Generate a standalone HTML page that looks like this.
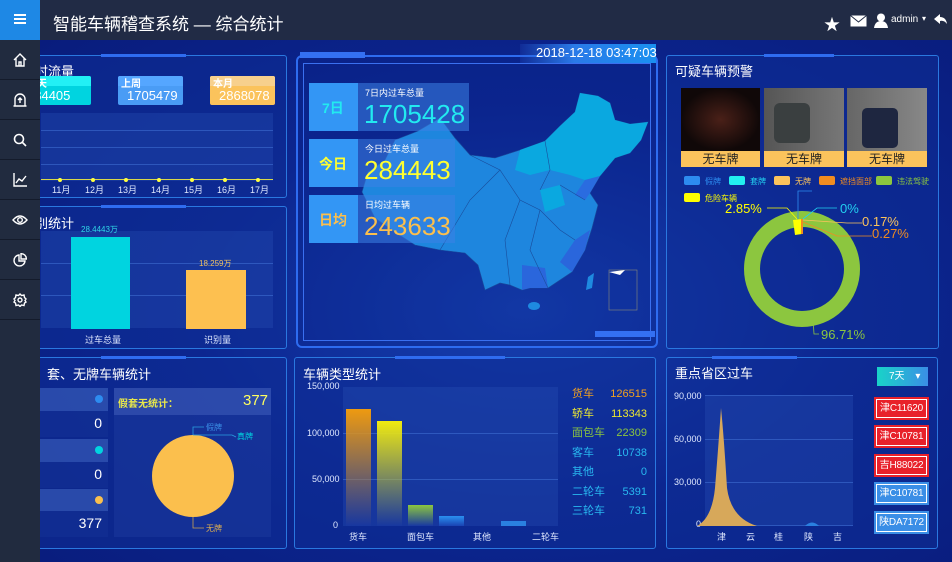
<!DOCTYPE html>
<html><head><meta charset="utf-8"><style>
*{margin:0;padding:0;box-sizing:border-box}
body{width:952px;height:562px;overflow:hidden;position:relative;font-family:"Liberation Sans","Noto Sans CJK SC",sans-serif;color:#fff;
background:radial-gradient(ellipse at 55% 55%,#1640b0 0%,#0c2690 45%,#081a78 100%)}
.abs{position:absolute}
.hdr{left:0;top:0;width:952px;height:40px;background:#212b45;z-index:5}
.side{left:0;top:40px;width:40px;height:522px;background:#212b3f;z-index:5}
.side div{height:40px;border-bottom:1px solid #141b2b;display:flex;align-items:center;justify-content:center}
.panel{position:absolute;background:rgba(14,45,150,.55);border:1px solid #2a78e0;border-radius:3px}
.panel .acc{position:absolute;top:-2px;height:3px;background:#2f6cf0}
.t{position:absolute;font-size:13px;color:#fff;white-space:nowrap}
.grid{position:absolute;background:rgba(40,80,180,.35)}
.gl{position:absolute;left:0;right:0;height:1px;background:rgba(70,120,220,.5)}
.s{font-size:9px;color:#dfe8ff}
.plate{position:absolute;left:207px;width:55px;height:23px;padding:2px}
.plate div{border:1px solid #fff;height:19px;font-size:10px;text-align:center;line-height:17px;white-space:nowrap;overflow:hidden;letter-spacing:-0.2px}
</style></head><body>
<div class="abs hdr">
 <div class="abs" style="left:0;top:0;width:40px;height:40px;background:#1e88e5"><div style="position:absolute;left:14px;top:14px;width:12px;height:2px;background:#fff;box-shadow:0 4px 0 #fff,0 8px 0 #fff"></div></div>
 <div class="t" style="left:53px;top:10px;font-size:17px">智能车辆稽查系统 — 综合统计</div>
 <div class="t" style="left:824px;top:11px;font-size:16px">★</div>
 <svg class="abs" style="left:850px;top:15px" width="17" height="12"><rect x="0.5" y="0.5" width="16" height="11" fill="#fff"/><path d="M0.5 0.5 L8.5 7 L16.5 0.5" stroke="#212b45" fill="none"/></svg>
 <svg class="abs" style="left:874px;top:13px" width="14" height="15"><circle cx="7" cy="4.5" r="4" fill="#fff"/><path d="M0 15 Q1 8 7 8 Q13 8 14 15Z" fill="#fff"/></svg>
 <div class="t" style="left:891px;top:14px;font-size:10px">admin</div>
 <div class="t" style="left:922px;top:14px;font-size:8px">▾</div>
 <svg class="abs" style="left:934px;top:14px" width="13" height="11"><path d="M0 5 L6 0 L6 3 Q12 3 13 10 Q10 6 6 7 L6 10Z" fill="#fff"/></svg>
</div>
<div class="abs side">
 <div><svg width="14" height="14" fill="none" stroke="#fff" stroke-width="1.4"><path d="M1 7 L7 1 L13 7 M3 5.5 V13 H11 V5.5 M6 13 V9 H8 V13"/></svg></div>
 <div><svg width="14" height="14" fill="none" stroke="#fff" stroke-width="1.4"><path d="M2 13 V6 A5 5 0 0 1 12 6 V13 M0.5 13 H13.5 M7 5 V10 M5 7 L7 5 L9 7"/></svg></div>
 <div><svg width="14" height="14" fill="none" stroke="#fff" stroke-width="1.6"><circle cx="6" cy="6" r="4.5"/><path d="M9.5 9.5 L13 13"/></svg></div>
 <div><svg width="14" height="14" fill="none" stroke="#fff" stroke-width="1.4"><path d="M1 0 V13 H14 M3 10 L6 6 L9 8 L13 3"/></svg></div>
 <div><svg width="16" height="12" fill="none" stroke="#fff" stroke-width="1.4"><path d="M1 6 Q8 -2 15 6 Q8 14 1 6Z"/><circle cx="8" cy="6" r="2.3"/></svg></div>
 <div><svg width="14" height="14" fill="none" stroke="#fff" stroke-width="1.4"><path d="M6 2 A5.5 5.5 0 1 0 12 8 H6Z M8 0.7 A5 5 0 0 1 13.3 6 H8Z"/></svg></div>
 <div><svg width="14" height="14" fill="none" stroke="#fff" stroke-width="1.4"><circle cx="7" cy="7" r="2"/><path d="M7 1 L8.5 2.5 L11 2 L11.5 4.5 L13 6 L12 7.5 L13 9 L11.5 10 L11 12.5 L8.5 12 L7 13.5 L5.5 12 L3 12.5 L2.5 10 L1 9 L2 7.5 L1 6 L2.5 4.5 L3 2 L5.5 2.5Z"/></svg></div>
</div>

<!-- left panel 1 -->
<div class="panel" style="left:30px;top:55px;width:257px;height:143px">
 <div class="acc" style="left:70px;width:85px"></div>
 <div class="t" style="left:4px;top:5px">时流量</div>
 <div class="abs" style="left:-10px;top:20px;width:70px;height:29px;background:#00d4e0;border-radius:2px;overflow:hidden"><div style="height:10px;background:#22f0f5"></div><div class="t" style="left:6px;top:-1px;font-size:10px;font-weight:bold">今天</div><div class="t" style="left:6px;top:12px;font-size:13px">284405</div></div>
 <div class="abs" style="left:87px;top:20px;width:65px;height:29px;background:#4a9cf5;border-radius:2px;overflow:hidden"><div style="height:10px;background:#55a6ff"></div><div class="t" style="left:3px;top:-1px;font-size:10px;font-weight:bold">上周</div><div class="t" style="left:9px;top:12px;font-size:13px">1705479</div></div>
 <div class="abs" style="left:179px;top:20px;width:65px;height:29px;background:#fbc35c;border-radius:2px;overflow:hidden"><div style="height:10px;background:#f7d08d"></div><div class="t" style="left:3px;top:-1px;font-size:10px;font-weight:bold">本月</div><div class="t" style="left:9px;top:12px;font-size:13px">2868078</div></div>
 <div class="grid" style="left:10px;top:57px;width:232px;height:68px"><div class="gl" style="top:17px"></div><div class="gl" style="top:34px"></div><div class="gl" style="top:51px"></div></div>
 <div class="abs" style="left:10px;top:123px;width:232px;height:1px;background:#d8d84a"></div>
 <svg class="abs" style="left:0;top:120px" width="257" height="8"><g fill="#ffff40"><circle cx="29" cy="4" r="2"/><circle cx="62" cy="4" r="2"/><circle cx="95" cy="4" r="2"/><circle cx="128" cy="4" r="2"/><circle cx="161" cy="4" r="2"/><circle cx="194" cy="4" r="2"/><circle cx="227" cy="4" r="2"/></g></svg>
 <div class="t s" style="left:21px;top:127px">11月</div><div class="t s" style="left:54px;top:127px">12月</div><div class="t s" style="left:87px;top:127px">13月</div><div class="t s" style="left:120px;top:127px">14月</div><div class="t s" style="left:153px;top:127px">15月</div><div class="t s" style="left:186px;top:127px">16月</div><div class="t s" style="left:219px;top:127px">17月</div>
</div>
<!-- left panel 2 -->
<div class="panel" style="left:30px;top:206px;width:257px;height:143px">
 <div class="acc" style="left:70px;width:85px"></div>
 <div class="t" style="left:4px;top:6px">别统计</div>
 <div class="grid" style="left:10px;top:24px;width:232px;height:97px"><div class="gl" style="top:32px"></div><div class="gl" style="top:64px"></div></div>
 <div class="abs" style="left:40px;top:30px;width:59px;height:92px;background:#00d4e0"></div>
 <div class="abs" style="left:155px;top:63px;width:60px;height:59px;background:#fdc050"></div>
 <div class="t" style="left:50px;top:17px;font-size:8px;color:#2fd8e8">28.4443万</div>
 <div class="t" style="left:168px;top:51px;font-size:8px;color:#f0c060">18.259万</div>
 <div class="t s" style="left:54px;top:126px">过车总量</div><div class="t s" style="left:173px;top:126px">识别量</div>
</div>
<!-- left panel 3 -->
<div class="panel" style="left:30px;top:357px;width:257px;height:192px">
 <div class="acc" style="left:70px;width:85px"></div>
 <div class="t" style="left:16px;top:6px">套、无牌车辆统计</div>
 <div class="abs" style="left:0;top:30px;width:77px;height:23px;background:rgba(70,110,200,.5)"><div class="abs" style="left:64px;top:7px;width:8px;height:8px;border-radius:50%;background:#2d8cf0"></div></div>
 <div class="abs" style="left:0;top:53px;width:77px;height:26px;background:rgba(20,50,150,.5)"><div class="t" style="right:6px;top:4px;font-size:14px">0</div></div>
 <div class="abs" style="left:0;top:81px;width:77px;height:23px;background:rgba(70,110,200,.5)"><div class="abs" style="left:64px;top:7px;width:8px;height:8px;border-radius:50%;background:#00d4e0"></div></div>
 <div class="abs" style="left:0;top:104px;width:77px;height:26px;background:rgba(20,50,150,.5)"><div class="t" style="right:6px;top:4px;font-size:14px">0</div></div>
 <div class="abs" style="left:0;top:131px;width:77px;height:22px;background:rgba(70,110,200,.5)"><div class="abs" style="left:64px;top:7px;width:8px;height:8px;border-radius:50%;background:#f9c04e"></div></div>
 <div class="abs" style="left:0;top:153px;width:77px;height:26px;background:rgba(20,50,150,.5)"><div class="t" style="right:6px;top:4px;font-size:14px">377</div></div>
 <div class="abs" style="left:83px;top:30px;width:157px;height:149px;background:rgba(30,60,160,.45)">
  <div class="abs" style="left:0;top:0;width:157px;height:27px;background:rgba(80,110,200,.4)"></div>
  <div class="t" style="left:4px;top:7px;font-size:10px;color:#e8e84a;font-weight:bold">假套无统计：</div>
  <div class="t" style="left:129px;top:4px;font-size:15px;color:#ffff60">377</div>
  <svg class="abs" style="left:0;top:27px" width="157" height="122"><circle cx="79" cy="61" r="41" fill="#fbbf4d"/><path d="M79 20 V12 H90 M79 20 L118 20 L122 22" stroke="#2aa0e0" fill="none" stroke-width=".8"/><path d="M79 102 V113 H90" stroke="#c9a050" fill="none" stroke-width=".8"/><text x="92" y="15" font-size="8" fill="#3a8ee6">假牌</text><text x="123" y="24" font-size="8" fill="#00d4e0">真牌</text><text x="92" y="116" font-size="8" fill="#e0b050">无牌</text></svg>
 </div>
</div>

<!-- map panel -->
<div class="abs" style="left:296px;top:55px;width:362px;height:293px;border:2px solid #2e6cf0;border-radius:6px;background:rgba(10,35,140,.3)"></div>
<div class="abs" style="left:303px;top:63px;width:348px;height:278px;border:1px solid #3a70f0"></div>
<div class="abs" style="left:300px;top:52px;width:65px;height:6px;background:#3470f2"></div>
<div class="abs" style="left:595px;top:331px;width:60px;height:6px;background:#3470f2"></div>
<div class="abs" style="left:520px;top:44px;width:136px;height:19px;background:linear-gradient(90deg,rgba(40,80,200,.2),#2a7ae8 40%,#1a90f0)"></div>
<div class="t" style="left:536px;top:45px;font-size:13px">2018-12-18 03:47:03</div>
<svg class="abs" style="left:296px;top:55px" width="362" height="293">
 <g transform="translate(-296,-55)">
 <path d="M580 93 L598 96 L610 103 L615 120 L630 124 L648 122 L641 140 L630 153 L615 158 L600 176 L590 193 L598 205 L592 228 L585 250 L572 272 L548 288 L530 288 L522 290 L510 285 L500 283 L485 290 L478 265 L465 253 L440 250 L415 245 L395 232 L375 218 L362 192 L368 172 L385 160 L395 140 L418 131 L440 118 L455 138 L470 155 L495 158 L520 150 L545 141 L560 126 L575 112 Z" fill="#1e86de" stroke="#1a4d9c" stroke-width=".6"/>
 <path d="M520 150 L545 141 L560 126 L575 112 L580 93 L598 96 L610 103 L615 120 L630 124 L648 122 L641 140 L630 153 L615 158 L600 176 L585 180 L570 175 L550 170 L530 175 L515 170Z" fill="#0aa8e0"/>
 <path d="M600 176 L590 193 L585 200 L575 195 L585 180Z" fill="#2a6ce0"/>
 <path d="M590 230 L585 250 L572 272 L560 262 L575 240Z" fill="#2a66dc"/>
 <path d="M522 265 L545 268 L548 288 L530 288 L522 290Z" fill="#2a66dc"/>
 <path d="M540 190 L560 185 L565 205 L545 212Z" fill="#0aa8e0"/>
 <g stroke="#1a4d9c" stroke-width=".6" fill="none"><path d="M470 155 L500 170 L520 200 L540 210 L560 230 L575 240 M520 200 L505 240 L510 285 M540 210 L530 250 L548 288 M560 185 L585 200 M545 141 L550 170 L540 190 M500 170 L470 200 L440 250"/></g>
 <path d="M588 277 L594 273 L592 288 L586 290Z" fill="#1e8ae0"/>
 <ellipse cx="534" cy="306" rx="6" ry="4" fill="#1e8ae0"/>
 <rect x="609" y="270" width="28" height="40" fill="none" stroke="#8a8a7a" stroke-width=".6"/><path d="M609 272 L625 270 L620 275Z" fill="#fff"/>
 </g>
</svg>
<!-- stat boxes -->
<div class="abs" style="left:309px;top:83px;width:49px;height:48px;background:#3396f5"></div><div class="abs" style="left:358px;top:83px;width:111px;height:48px;background:rgba(60,130,230,.55)"></div>
<div class="abs" style="left:309px;top:139px;width:49px;height:48px;background:#3396f5"></div><div class="abs" style="left:358px;top:139px;width:97px;height:48px;background:rgba(60,130,230,.55)"></div>
<div class="abs" style="left:309px;top:195px;width:49px;height:48px;background:#3396f5"></div><div class="abs" style="left:358px;top:195px;width:97px;height:48px;background:rgba(60,130,230,.55)"></div>
<div class="t" style="left:322px;top:98px;font-size:14px;font-weight:bold;color:#22eaf0">7日</div>
<div class="t" style="left:319px;top:154px;font-size:14px;font-weight:bold;color:#ffff30">今日</div>
<div class="t" style="left:319px;top:210px;font-size:14px;font-weight:bold;color:#fbbf4d">日均</div>
<div class="t" style="left:365px;top:86px;font-size:9px">7日内过车总量</div>
<div class="t" style="left:365px;top:142px;font-size:9px">今日过车总量</div>
<div class="t" style="left:365px;top:198px;font-size:9px">日均过车辆</div>
<div class="t" style="left:364px;top:99px;font-size:26px;color:#22eaf0">1705428</div>
<div class="t" style="left:364px;top:155px;font-size:26px;color:#ffff30">284443</div>
<div class="t" style="left:364px;top:211px;font-size:26px;color:#fbbf4d">243633</div>

<!-- bottom middle -->
<div class="panel" style="left:294px;top:357px;width:362px;height:192px">
 <div class="acc" style="left:100px;width:110px"></div>
 <div class="t" style="left:8px;top:6px">车辆类型统计</div>
 <div class="grid" style="left:48px;top:29px;width:215px;height:139px"><div class="gl" style="top:46px"></div><div class="gl" style="top:92px"></div></div>
 <div class="t s" style="left:12px;top:23px">150,000</div><div class="t s" style="left:12px;top:70px">100,000</div><div class="t s" style="left:17px;top:116px">50,000</div><div class="t s" style="left:38px;top:162px">0</div>
 <div class="abs" style="left:51px;top:51px;width:25px;height:117px;background:linear-gradient(#ee9a10,rgba(30,60,170,.2))"></div>
 <div class="abs" style="left:82px;top:63px;width:25px;height:105px;background:linear-gradient(#f0ea10,rgba(30,60,170,.2))"></div>
 <div class="abs" style="left:113px;top:147px;width:25px;height:21px;background:linear-gradient(#8cc63f,rgba(30,60,170,.3))"></div>
 <div class="abs" style="left:144px;top:158px;width:25px;height:10px;background:linear-gradient(#2a90f0,rgba(30,80,200,.5))"></div>
 <div class="abs" style="left:206px;top:163px;width:25px;height:5px;background:#2a80e0"></div>
 <div class="t s" style="left:54px;top:172px">货车</div><div class="t s" style="left:112px;top:172px">面包车</div><div class="t s" style="left:178px;top:172px">其他</div><div class="t s" style="left:237px;top:172px">二轮车</div>
 <div style="position:absolute;left:277px;top:27px;width:75px;font-size:11px;line-height:19.5px">
  <div style="color:#f0a020">货车<span style="float:right">126515</span></div>
  <div style="color:#f0ea30">轿车<span style="float:right">113343</span></div>
  <div style="color:#8cc63f">面包车<span style="float:right">22309</span></div>
  <div style="color:#28b8f0">客车<span style="float:right">10738</span></div>
  <div style="color:#28b8f0">其他<span style="float:right">0</span></div>
  <div style="color:#28b8f0">二轮车<span style="float:right">5391</span></div>
  <div style="color:#28b8f0">三轮车<span style="float:right">731</span></div>
 </div>
</div>

<!-- right top -->
<div class="panel" style="left:666px;top:55px;width:273px;height:294px">
 <div class="acc" style="left:97px;width:70px"></div>
 <div class="t" style="left:8px;top:5px">可疑车辆预警</div>
 <div class="abs" style="left:14px;top:32px;width:79px;height:63px;background:radial-gradient(ellipse at 50% 50%,#4a2018,#100808 70%)"></div>
 <div class="abs" style="left:97px;top:32px;width:80px;height:63px;background:linear-gradient(90deg,#555,#777);"><div class="abs" style="left:10px;top:15px;width:36px;height:40px;background:#3a3f40;border-radius:6px"></div></div>
 <div class="abs" style="left:180px;top:32px;width:80px;height:63px;background:linear-gradient(90deg,#666,#888)"><div class="abs" style="left:15px;top:20px;width:36px;height:40px;background:#1e2640;border-radius:5px"></div></div>
 <div class="abs" style="left:14px;top:95px;width:79px;height:16px;background:#fbc35c;color:#222;font-size:12px;text-align:center;line-height:16px">无车牌</div>
 <div class="abs" style="left:97px;top:95px;width:80px;height:16px;background:#fbc35c;color:#222;font-size:12px;text-align:center;line-height:16px">无车牌</div>
 <div class="abs" style="left:180px;top:95px;width:80px;height:16px;background:#fbc35c;color:#222;font-size:12px;text-align:center;line-height:16px">无车牌</div>
 <svg class="abs" style="left:0;top:110px" width="273" height="184">
  <g font-size="8">
  <rect x="17" y="10" width="16" height="9" rx="2" fill="#2d8cf0"/><text x="38" y="18" fill="#2d8cf0">假牌</text>
  <rect x="62" y="10" width="16" height="9" rx="2" fill="#22f0f0"/><text x="83" y="18" fill="#22d0f0">套牌</text>
  <rect x="107" y="10" width="16" height="9" rx="2" fill="#fbc35c"/><text x="128" y="18" fill="#fbc35c">无牌</text>
  <rect x="152" y="10" width="16" height="9" rx="2" fill="#f08c20"/><text x="173" y="18" fill="#f08c20">遮挡面部</text>
  <rect x="209" y="10" width="16" height="9" rx="2" fill="#8cc63f"/><text x="230" y="18" fill="#8cc63f">违法驾驶</text>
  <rect x="17" y="27" width="16" height="9" rx="2" fill="#ffff00"/><text x="38" y="35" fill="#ffff00">危险车辆</text>
  </g>
  <circle cx="135" cy="103" r="50" fill="none" stroke="#8cc63f" stroke-width="16"/>
  <path d="M126 54 L135 53 L135 68 L128 69Z" fill="#ffff00"/>
  <rect x="134" y="53" width="2" height="15" fill="#f08c20"/>
  <g fill="none" stroke-width=".8"><path d="M130 53 L120 42 H100" stroke="#ffff00"/><path d="M136 53 L150 42 H170" stroke="#22d0f0"/><path d="M136 54 L180 57 H195" stroke="#fbc35c"/><path d="M136 56 L170 70 H205" stroke="#f08c20"/><path d="M146 152 L147 168 H152" stroke="#8cc63f"/><path d="M131 53 V25 H145" stroke="#2d8cf0"/></g>
  <g font-size="13"><text x="58" y="47" fill="#ffff00">2.85%</text><text x="173" y="47" fill="#22d0f0">0%</text><text x="195" y="60" fill="#fbc35c">0.17%</text><text x="205" y="72" fill="#f08c20">0.27%</text><text x="154" y="173" fill="#8cc63f">96.71%</text></g>
 </svg>
</div>

<!-- right bottom -->
<div class="panel" style="left:666px;top:357px;width:272px;height:192px">
 <div class="acc" style="left:45px;width:85px"></div>
 <div class="t" style="left:8px;top:5px">重点省区过车</div>
 <div class="abs" style="left:210px;top:9px;width:51px;height:19px;background:linear-gradient(90deg,#19d3c8,#3a8ee6);font-size:10px;line-height:19px;padding-left:12px;white-space:nowrap">7天 <span style="margin-left:8px">▾</span></div>
 <div class="grid" style="left:38px;top:37px;width:148px;height:131px"><div class="gl" style="top:0"></div><div class="gl" style="top:44px"></div><div class="gl" style="top:87px"></div><div class="gl" style="top:130px"></div></div>
 <div class="t s" style="left:7px;top:33px">90,000</div><div class="t s" style="left:7px;top:76px">60,000</div><div class="t s" style="left:7px;top:119px">30,000</div><div class="t s" style="left:29px;top:161px">0</div>
 <svg class="abs" style="left:0;top:0" width="200" height="175"><path d="M30 168 Q45 160 48 130 Q52 80 54 50 Q57 80 60 130 Q64 160 90 168Z" fill="#d7a85a"/><path d="M138 168 Q145 161 152 168Z" fill="#2a80e0"/></svg>
 <div class="t s" style="left:50px;top:172px">津</div><div class="t s" style="left:79px;top:172px">云</div><div class="t s" style="left:107px;top:172px">桂</div><div class="t s" style="left:137px;top:172px">陕</div><div class="t s" style="left:166px;top:172px">吉</div>
 <div class="plate" style="top:39px;background:#e8212a"><div>津C11620</div></div>
 <div class="plate" style="top:67px;background:#e8212a"><div>津C10781</div></div>
 <div class="plate" style="top:96px;background:#e8212a"><div>吉H88022</div></div>
 <div class="plate" style="top:124px;background:#3a8ee6"><div>津C10781</div></div>
 <div class="plate" style="top:153px;background:#3a8ee6"><div>陕DA7172</div></div>
</div>
</body></html>
